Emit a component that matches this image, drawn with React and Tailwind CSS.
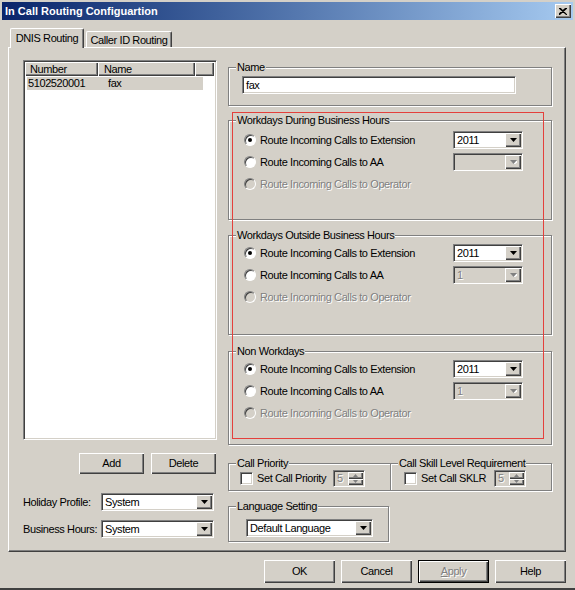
import React from "react";

const raised =
  "bg-[#d4d0c8] shadow-[inset_1px_1px_0_#fff,inset_-1px_-1px_0_#404040,inset_-2px_-2px_0_#808080]";
const sunken =
  "border border-t-[#808080] border-l-[#808080] border-r-white border-b-white shadow-[inset_1px_1px_0_#404040,inset_-1px_-1px_0_#d4d0c8]";
const dimText = "text-[#808080] [text-shadow:1px_1px_0_#fff]";

function Arrow({ disabled }) {
  return (
    <svg width="7" height="4" viewBox="0 0 7 4">
      {disabled && <path d="M1 1h7L4.5 5z" fill="#fff" />}
      <path d="M0 0h7L3.5 4z" fill={disabled ? "#808080" : "#000"} />
    </svg>
  );
}

function Combo({ value, className, disabled }) {
  return (
    <div
      className={`${className} h-[18px] ${sunken} p-[1px] flex ${
        disabled ? "bg-[#d4d0c8]" : "bg-white"
      }`}
    >
      <div className={`flex-1 pl-[2px] leading-[14px] ${disabled ? dimText : ""}`}>
        {value}
      </div>
      <div className={`w-[16px] h-full flex items-center justify-center ${raised}`}>
        <Arrow disabled={disabled} />
      </div>
    </div>
  );
}

function Radio({ checked, disabled }) {
  return (
    <div
      className={`w-[12px] h-[12px] rounded-full border border-t-[#808080] border-l-[#808080] border-r-white border-b-white shadow-[inset_1px_1px_0_#404040] flex items-center justify-center ${
        disabled ? "bg-[#d4d0c8]" : "bg-white"
      }`}
    >
      {checked && <div className="w-[4px] h-[4px] rounded-full bg-black" />}
    </div>
  );
}

function Checkbox() {
  return <div className={`w-[13px] h-[13px] bg-white ${sunken}`} />;
}

function Spinner() {
  return (
    <div className={`w-[32px] h-[17px] ${sunken} p-[1px] flex bg-[#d4d0c8]`}>
      <div className={`flex-1 pl-[2px] leading-[13px] ${dimText}`}>5</div>
      <div className="w-[15px] flex flex-col">
        <div className={`flex-1 flex items-center justify-center ${raised}`}>
          <svg width="5" height="3" viewBox="0 0 5 3">
            <path d="M0 3h5L2.5 0z" fill="#808080" />
          </svg>
        </div>
        <div className={`flex-1 flex items-center justify-center ${raised}`}>
          <svg width="5" height="3" viewBox="0 0 5 3">
            <path d="M0 0h5L2.5 3z" fill="#808080" />
          </svg>
        </div>
      </div>
    </div>
  );
}

function Group({ title, className, inner, children }) {
  return (
    <fieldset
      className={`border border-[#808080] shadow-[inset_1px_1px_0_#fff,1px_1px_0_#fff] ${className}`}
    >
      <legend className="ml-[7px] px-[1px] bg-[#d4d0c8] leading-[13px]">{title}</legend>
      <div className={inner}>{children}</div>
    </fieldset>
  );
}

function RouteRow({ label, checked, disabled, combo }) {
  return (
    <div className="h-[22px] flex items-center pl-[15px]">
      <div className="w-[209px] flex items-center gap-[4px]">
        <Radio checked={checked} disabled={disabled} />
        <span className={disabled ? dimText : ""}>{label}</span>
      </div>
      {combo}
    </div>
  );
}

function RouteRows({ aaValue }) {
  return (
    <>
      <RouteRow
        label="Route Incoming Calls to Extension"
        checked
        combo={<Combo value="2011" className="w-[70px]" />}
      />
      <RouteRow
        label="Route Incoming Calls to AA"
        combo={<Combo value={aaValue} className="w-[70px]" disabled />}
      />
      <RouteRow label="Route Incoming Calls to Operator" disabled />
    </>
  );
}

function Button({ label, disabled, isDefault }) {
  return (
    <div
      className={`w-[71px] h-[23px] flex items-center justify-center ${raised} ${
        isDefault ? "border border-black" : ""
      }`}
    >
      {disabled ? (
        <span className={dimText}>
          <span className="underline">A</span>pply
        </span>
      ) : (
        label
      )}
    </div>
  );
}

export default function App() {
  return (
    <div className="relative w-[575px] h-[590px] bg-[#d4d0c8] pt-[2px] px-[2px] border-b-2 border-b-[#404040] overflow-hidden font-['Liberation_Sans',Arial,sans-serif] text-[11px] leading-[13px] tracking-[-0.4px] text-black">
      {/* title bar */}
      <div className="h-[18px] flex items-center justify-between pl-[3px] pr-[2px] bg-gradient-to-r from-[#0a246a] to-[#a6caf0]">
        <span className="text-white font-bold tracking-normal">
          In Call Routing Configuartion
        </span>
        <div className={`w-[16px] h-[14px] flex items-center justify-center ${raised}`}>
          <svg width="8" height="7" viewBox="0 0 8 7">
            <path d="M0 0l8 7M1 0l7 7M8 0L0 7M7 0L-1 7" stroke="#000" strokeWidth="1.2" />
          </svg>
        </div>
      </div>

      {/* tabs */}
      <div className="mt-[8px] ml-[8px] h-[19px] flex items-end">
        <div className="relative z-10 -mb-[1px] w-[74px] h-[20px] bg-[#d4d0c8] border-t border-l border-r border-t-white border-l-white border-r-[#404040] rounded-t-[2px] shadow-[inset_-1px_0_0_#808080] flex items-start justify-center pt-[3px]">
          DNIS Routing
        </div>
        <div className="ml-[2px] w-[86px] h-[16px] bg-[#d4d0c8] border-t border-l border-r border-t-white border-l-white border-r-[#404040] rounded-t-[2px] shadow-[inset_-1px_0_0_#808080] flex items-start justify-center pt-[2px]">
          Caller ID Routing
        </div>
      </div>

      {/* tab panel */}
      <div className="ml-[6px] w-[558px] h-[505px] border border-t-white border-l-white border-r-[#404040] border-b-[#404040] shadow-[inset_-1px_-1px_0_#808080] pl-[14px] pt-[12px] flex">
        {/* left column */}
        <div className="w-[194px] flex flex-col">
          <div className={`h-[380px] bg-white ${sunken} p-[1px]`}>
            <div className="h-[14px] flex">
              <div className={`w-[73px] pl-[5px] leading-[14px] ${raised}`}>Number</div>
              <div className={`w-[97px] pl-[6px] leading-[14px] ${raised}`}>Name</div>
              <div className={`w-[19px] ${raised}`} />
            </div>
            <div className="mt-[1px] ml-[2px] w-[176px] h-[13px] bg-[#d4d0c8] flex items-center pl-[1px]">
              <span className="w-[80px]">5102520001</span>
              <span>fax</span>
            </div>
          </div>

          <div className="mt-[13px] pr-[1px] flex justify-end gap-[7px]">
            <div className={`w-[65px] h-[21px] flex items-center justify-center ${raised}`}>
              Add
            </div>
            <div className={`w-[65px] h-[21px] flex items-center justify-center ${raised}`}>
              Delete
            </div>
          </div>

          <div className="mt-[19px] flex items-center">
            <span className="w-[78px]">Holiday Profile:</span>
            <Combo value="System" className="w-[113px]" />
          </div>
          <div className="mt-[9px] flex items-center">
            <span className="w-[78px]">Business Hours:</span>
            <Combo value="System" className="w-[113px]" />
          </div>
        </div>

        {/* right column */}
        <div className="ml-[11px] w-[324px] flex flex-col">
          <Group title="Name" className="mt-[1px]" inner="pt-[2px] pb-[11px] pl-[13px]">
            <div className={`w-[274px] h-[18px] bg-white ${sunken} pl-[3px] leading-[16px]`}>
              fax
            </div>
          </Group>

          <Group
            title="Workdays During Business Hours"
            className="mt-[8px]"
            inner="pt-[2px] pb-[24px]"
          >
            <RouteRows aaValue="" />
          </Group>

          <Group
            title="Workdays Outside Business Hours"
            className="mt-[9px]"
            inner="pb-[26px]"
          >
            <RouteRows aaValue="1" />
          </Group>

          <Group title="Non Workdays" className="mt-[10px]" inner="pb-[20px]">
            <RouteRows aaValue="1" />
          </Group>

          <div className="mt-[12px] flex">
            <Group title="Call Priority" className="w-[163px]" inner="pb-[3px] pl-[11px]">
              <div className="h-[17px] flex items-center">
                <Checkbox />
                <span className="ml-[4px]">Set Call Priority</span>
                <div className="ml-[7px]">
                  <Spinner />
                </div>
              </div>
            </Group>
            <Group
              title="Call Skill Level Requirement"
              className="-ml-[1px] w-[162px]"
              inner="pb-[3px] pl-[13px]"
            >
              <div className="h-[17px] flex items-center">
                <Checkbox />
                <span className="ml-[4px]">Set Call SKLR</span>
                <div className="ml-[8px]">
                  <Spinner />
                </div>
              </div>
            </Group>
          </div>

          <Group
            title="Language Setting"
            className="mt-[9px] w-[161px]"
            inner="pt-[6px] pb-[4px] pl-[17px]"
          >
            <Combo value="Default Language" className="w-[127px]" />
          </Group>
        </div>
      </div>

      {/* dialog buttons */}
      <div className="mt-[8px] pr-[7px] flex justify-end gap-[6px]">
        <Button label="OK" />
        <Button label="Cancel" />
        <Button label="Apply" disabled isDefault />
        <Button label="Help" />
      </div>

      {/* red annotation box */}
      <div className="absolute left-[232px] top-[112px] w-[312px] h-[327px] border border-[#e4403c] pointer-events-none" />
    </div>
  );
}
